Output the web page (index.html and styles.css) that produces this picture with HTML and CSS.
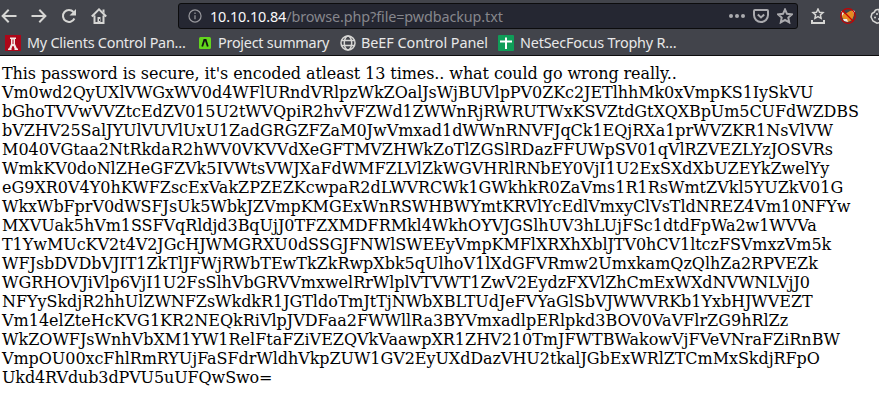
FILE: index.html
```html
<!DOCTYPE html>
<html lang="en">
<head>
<meta charset="utf-8">
<title>pwdbackup.txt</title>
<link rel="stylesheet" href="styles.css">
</head>
<body>
<header class="chrome">
  <div class="toolbar">
    <nav class="nav">
      <svg class="icon" viewBox="0 0 16 16"><path d="M15.500 8H2M7.700 1.800L1.600 8l6.100 6.200"/></svg>
      <svg class="icon" viewBox="0 0 16 16"><path d="M.5 8H14M8.300 1.800L14.400 8l-6.100 6.200"/></svg>
      <svg class="icon" viewBox="0 0 16 16"><path d="M12.500 4A6 6 0 1 0 13.400 10.500"/><path class="solid" d="M15 1v6.500H8.500z"/></svg>
      <svg class="icon" viewBox="0 0 16 16"><path d="M.8 8.500L8 1.400l7.200 7.100M3.500 7.500V15h9V7.500"/><path class="solid" d="M11.500 1.500h2v4l-2-2zM6.500 9h3v6h-3z"/><path class="door" d="M8.500 11v2"/></svg>
    </nav>
    <div class="urlbar">
      <svg class="info" viewBox="0 0 16 16"><circle cx="8" cy="8" r="6.900"/><path d="M8 7.200v4.600M8 4v1.800"/></svg>
      <span class="url">10.10.10.84<span class="path">/browse.php?file=pwdbackup.txt</span></span>
      <div class="actions">
        <svg class="icon dim" viewBox="0 0 16 16"><g class="solid"><circle cx="2" cy="8" r="2"/><circle cx="8" cy="8" r="2"/><circle cx="14" cy="8" r="2"/></g></svg>
        <svg class="icon dim" viewBox="0 0 16 16"><path d="M2 2h12q1 0 1 1v4a7 7 0 0 1-14 0V3q0-1 1-1z"/><path d="M4.800 6.500L8 9.500l3.200-3"/></svg>
        <svg class="icon dim" viewBox="0 0 16 16"><path d="M8 1.500l2 4.300 4.800.6-3.500 3.200.9 4.800L8 12l-4.200 2.400.9-4.800L1.200 6.400 6 5.800z"/></svg>
      </div>
    </div>
    <div class="extensions">
      <svg class="icon" viewBox="0 0 16 16"><path class="thin" d="M8 1l1.500 3.200 3.500.4-2.600 2.300.7 3.500L8 8.700l-3.100 1.700.7-3.500L3 4.600l3.500-.4z"/><path d="M2 12v3h12v-3"/></svg>
      <svg class="icon fox" viewBox="0 0 16 16"><path class="orange" d="M2 4l3 2 5-3 3-1 1 5-2 5-4 2-4-2-2-3z"/><path class="white" d="M1 3l3 2-2 3zM12 2l3 1-1 3zM3 11l4 0 1 3-4-1z"/><circle cx="8" cy="8" r="7.300"/><path d="M3 3l10 10"/></svg>
      <svg class="icon" viewBox="0 0 16 16"><path class="thin" d="M9 1.500Q5 1 4.500 4L2 5.500 1 9l2 4 4 2.200 5-1 2.500-4.700q-3 0-2.500-3-3 0-3-5z"/><g class="solid"><circle cx="7" cy="6" r="1"/><circle cx="5" cy="9.500" r="1"/><circle cx="9" cy="11" r="1"/></g></svg>
    </div>
  </div>
  <div class="bookmarks">
    <a class="bookmark one"><svg class="icon" viewBox="0 0 16 16"><rect class="red" width="16" height="16"/><path class="white" d="M5 2.500h6v1.500h-1v5l2 4.500h1V15H9.500v-1.500L8.500 11h-1l-1 2.500V15H3v-1.500h1L6 9V4H5z"/><path class="red" d="M7.500 4.500h1V9h-1z"/></svg>My Clients Control Pan…</a>
    <a class="bookmark two"><svg class="icon" viewBox="0 0 16 16"><rect class="lime" x="2" y="2" width="12" height="12" rx="1.500"/><path class="black" d="M5.200 11.500L7.300 5h1.400l2.100 6.500"/></svg>Project summary</a>
    <a class="bookmark three"><svg class="icon globe" viewBox="0 0 16 16"><circle cx="8" cy="8" r="7"/><ellipse cx="8" cy="8" rx="3.700" ry="7"/><path d="M1.500 5.500h13M1.500 10.500h13"/></svg>BeEF Control Panel</a>
    <a class="bookmark four"><svg class="icon" viewBox="0 0 16 16"><rect class="green" width="16" height="16" rx="1"/><path class="cross" d="M2 6.500h12M8 2.500V14"/></svg>NetSecFocus Trophy R…</a>
  </div>
</header>
<main class="page">
<div>This password is secure, it's encoded atleast 13 times.. what could go wrong really..</div>
<div>Vm0wd2QyUXlVWGxWV0d4WFlURndVRlpzWkZOalJsWjBUVlpPV0ZKc2JETlhhMk0xVmpKS1IySkVU</div>
<div>bGhoTVVwVVZtcEdZV015U2tWVQpiR2hvVFZWd1ZWWnRjRWRUTWxKSVZtdGtXQXBpUm5CUFdWZDBS</div>
<div>bVZHV25SalJYUlVUVlUxU1ZadGRGZFZaM0JwVmxad1dWWnRNVFJqCk1EQjRXa1prWVZKR1NsVlVW</div>
<div>M040VGtaa2NtRkdaR2hWV0VKVVdXeGFTMVZHWkZoTlZGSlRDazFFUWpSV01qVlRZVEZLYzJOSVRs</div>
<div>WmkKV0doNlZHeGFZVk5IVWtsVWJXaFdWMFZLVlZkWGVHRlRNbEY0VjI1U2ExSXdXbUZEYkZwelYy</div>
<div>eG9XR0V4Y0hKWFZscExVakZPZEZKcwpaR2dLWVRCWk1GWkhkR0ZaVms1R1RsWmtZVkl5YUZkV01G</div>
<div>WkxWbFprV0dWSFJsUk5WbkJZVmpKMGExWnRSWHBWYmtKRVlYcEdlVmxyClVsTldNREZ4Vm10NFYw</div>
<div>MXVUak5hVm1SSFVqRldjd3BqUjJ0TFZXMDFRMkl4WkhOYVJGSlhUV3hLUjFSc1dtdFpWa2w1WVVa</div>
<div>T1YwMUcKV2t4V2JGcHJWMGRXU0dSSGJFNWlSWEEyVmpKMFlXRXhXblJTV0hCV1ltczFSVmxzVm5k</div>
<div>WFJsbDVDbVJIT1ZkTlJFWjRWbTEwTkZkRwpXbk5qUlhoV1lXdGFVRmw2UmxkamQzQlhZa2RPVEZk</div>
<div>WGRHOVJiVlp6VjI1U2FsSlhVbGRVVmxwelRrWlplVTVWT1ZwV2EydzFXVlZhCmExWXdNVWNLVjJ0</div>
<div>NFYySkdjR2hhUlZWNFZsWkdkR1JGTldoTmJtTjNWbXBLTUdJeFVYaGlSbVJWWVRKb1YxbHJWVEZT</div>
<div>Vm14elZteHcKVG1KR2NEQkRiVlpJVDFaa2FWWllRa3BYVmxadlpERlpkd3BOV0VaVFlrZG9hRlZz</div>
<div>WkZOWFJsWnhVbXM1YW1RelFtaFZiVEZQVkVaawpXR1ZHV210TmJFWTBWakowVjFVeVNraFZiRnBW</div>
<div>VmpOU00xcFhlRmRYUjFaSFdrWldhVkpZUW1GV2EyUXdDazVHU2tkalJGbExWRlZTCmMxSkdjRFpO</div>
<div>Ukd4RVdub3dPVU5uUFQwSwo=</div>
</main>
</body>
</html>
```
FILE: styles.css
```css
* { box-sizing: border-box; }
body { margin: 0; background: #fff; overflow: hidden; }
.chrome {
  height: 56px;
  background: #42444b;
  border-bottom: 1px solid #0c0c0d;
  font-family: "Noto Sans", sans-serif;
  font-size: 14.4px;
  line-height: 20px;
  color: #e8e8e8;
}
.toolbar { display: flex; height: 32px; align-items: center; }
.nav { display: flex; flex: none; gap: 14px; width: 178px; padding-left: 1px; }
.icon, .info { width: 16px; height: 16px; flex: none; fill: none; stroke: #d6d6d4; stroke-width: 2; }
.solid { fill: #d6d6d4; stroke: none; }
.door { stroke: #42444b; stroke-width: 1; }
.dim { stroke: #aaaaae; }
.dim .solid { fill: #aaaaae; }
.thin { stroke-width: 1.5; }
.urlbar {
  display: flex;
  flex: none;
  align-items: center;
  width: 620px;
  height: 26px;
  padding: 0 4px 0 9px;
  background: #252732;
  border: 1px solid #0c0c0d;
  border-radius: 3px;
}
.info { width: 14px; height: 14px; stroke: #97979c; stroke-width: 1.4; }
.url { margin-left: 8px; padding-top: 1px; color: #f9f9fa; letter-spacing: -.11px; white-space: nowrap; }
.path { color: #85868c; }
.actions { display: flex; gap: 8px; margin-left: auto; }
.extensions { display: flex; flex: none; gap: 14px; margin-left: 12px; }
.fox { stroke: #c80000; stroke-width: 1.2; }
.orange { fill: #e68a21; stroke: none; }
.white { fill: #f3e9e5; stroke: none; }
.bookmarks { display: flex; height: 22px; align-items: center; padding-left: 5px; }
.bookmark { display: flex; flex: none; align-items: center; gap: 7px; white-space: nowrap; letter-spacing: -.24px; }
.one { width: 192px; gap: 6px; }
.two { width: 143px; gap: 5px; }
.three { width: 158px; gap: 5px; letter-spacing: -.05px; }
.four { gap: 6px; letter-spacing: -.2px; }
.red { fill: #ad0719; stroke: none; }
.lime { fill: #62d51d; stroke: none; }
.green { fill: #0f9d58; stroke: none; }
.black { stroke: #111; stroke-width: 1.8; }
.globe { stroke-width: 1.5; }
.cross { stroke: #fff; }
.page {
  padding: 8px 2px;
  font-family: "DejaVu Serif", serif;
  font-size: 16px;
  line-height: 19px;
  color: #000;
  white-space: nowrap;
}
.page div:nth-child(1) { letter-spacing: -.085px; }
.page div:nth-child(2) { letter-spacing: -.066px; }
.page div:nth-child(3) { letter-spacing: -.088px; }
.page div:nth-child(4) { letter-spacing: -.035px; }
.page div:nth-child(6) { letter-spacing: -.03px; }
.page div:nth-child(8) { letter-spacing: -.055px; }
.page div:nth-child(9) { letter-spacing: -.05px; }
.page div:nth-child(10) { letter-spacing: -.05px; }
.page div:nth-child(11) { letter-spacing: -.015px; }
.page div:nth-child(12) { letter-spacing: -.033px; }
.page div:nth-child(13) { letter-spacing: -.045px; }
.page div:nth-child(16) { letter-spacing: -.06px; }
.page div:nth-child(17) { letter-spacing: -.12px; }
```
